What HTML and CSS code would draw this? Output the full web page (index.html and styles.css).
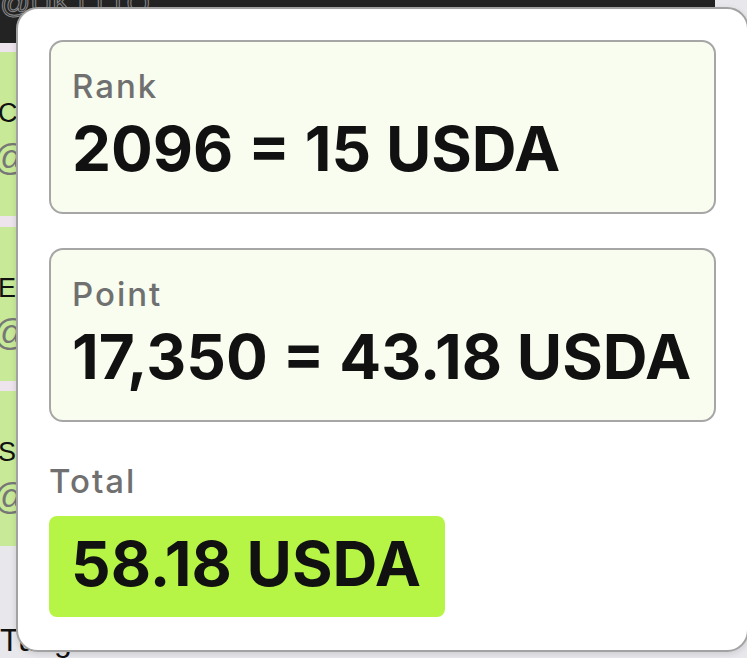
FILE: index.html
```html
<!DOCTYPE html>
<html lang="en">
<head>
    <meta charset="UTF-8">
    <meta name="viewport" content="width=device-width, initial-scale=1.0">
    <title>Reward</title>
    <link rel="stylesheet" href="styles.css">
</head>
<body>
    <div class="page">
        <div class="topbar">
            <span class="handle">@UKTTTO...</span>
        </div>
        <div class="list">
            <div class="item">
                <div class="name">C</div>
                <div class="at">@</div>
            </div>
            <div class="item">
                <div class="name">E</div>
                <div class="at">@</div>
            </div>
            <div class="item">
                <div class="name">S</div>
                <div class="at">@</div>
            </div>
        </div>
        <div class="footer-name">Tung</div>
    </div>

    <div class="popover">
        <div class="card">
            <div class="label">Rank</div>
            <div class="value">2096 = 15 USDA</div>
        </div>
        <div class="card">
            <div class="label">Point</div>
            <div class="value">17,350 = 43.18 USDA</div>
        </div>
        <div class="label total-label">Total</div>
        <div class="total">58.18 USDA</div>
    </div>
</body>
</html>
```

FILE: styles.css
```css
body {
    margin: 0;
    font-family: Inter, "Noto Sans", sans-serif;
    background-color: #e8e8ec;
    overflow: hidden;
}
.page {
    width: 747px;
    height: 658px;
}
.topbar {
    width: 715px;
    height: 43px;
    background-color: #232323;
    overflow: hidden;
    border-bottom: 9px solid #ede4ee;
}
.handle {
    display: block;
    margin-top: -14px;
    font-family: "Liberation Sans", sans-serif;
    font-size: 30px;
    color: #2a2a2a;
    -webkit-text-stroke: 1px #8a8a8a;
}
.list {
    width: 60px;
}
.item {
    background-color: #c8ea98;
    height: 164px;
    border-bottom: 11px solid #ede4ee;
    font-family: "Liberation Sans", sans-serif;
}
.item:nth-child(2) {
    height: 154px;
    border-bottom-width: 10px;
}
.item:last-child {
    height: 155px;
    border-bottom: none;
}
.name {
    padding-top: 46px;
    margin-left: -2px;
    font-size: 27px;
    color: #111;
}
.at {
    padding-top: 8px;
    font-size: 36px;
    color: #777;
    margin-left: -7px;
}
.footer-name {
    margin-top: 76px;
    font-family: "Liberation Sans", sans-serif;
    font-size: 32px;
    color: #111;
}
.popover {
    position: absolute;
    left: 16px;
    top: 7px;
    width: 667px;
    height: 579px;
    padding: 31px;
    background-color: #fff;
    border: 2px solid #a2a2a2;
    border-radius: 22px;
    box-shadow: 0 2px 6px rgba(0, 0, 0, 0.12);
}
.card {
    box-sizing: border-box;
    height: 174px;
    padding: 25px 21px 0;
    background-color: #f8fdef;
    border: 2px solid #a6a6a6;
    border-radius: 14px;
    margin-bottom: 34px;
}
.card + .card {
    margin-bottom: 0;
}
.label {
    font-size: 33px;
    font-weight: 500;
    line-height: 38px;
    letter-spacing: 2px;
    color: #707070;
}
.value {
    margin-top: 10px;
    font-size: 62px;
    font-weight: 700;
    line-height: 68px;
    color: #111;
    white-space: nowrap;
}
.total-label {
    margin-top: 40px;
}
.total {
    display: inline-block;
    margin-top: 16px;
    padding: 14px 24px 19px 22px;
    background-color: #b6f546;
    border-radius: 8px;
    font-size: 62px;
    font-weight: 700;
    line-height: 68px;
    color: #111;
}
```
